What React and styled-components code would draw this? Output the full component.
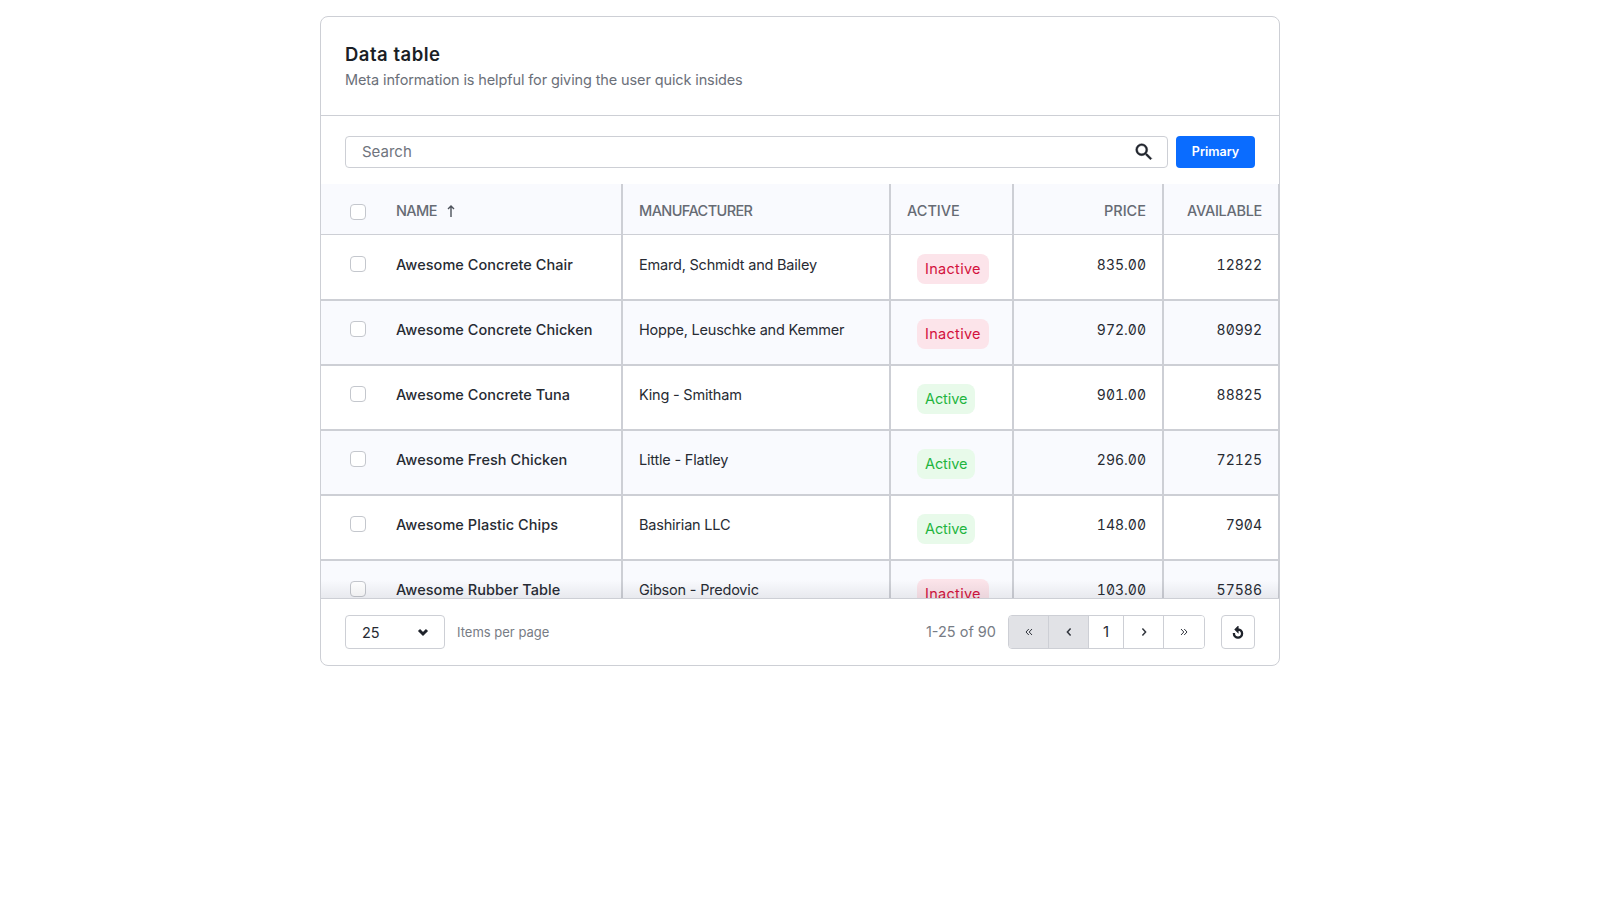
import * as React from "react";
import styled, { createGlobalStyle } from "styled-components";

const GlobalStyle = createGlobalStyle`
  * { box-sizing: border-box; }
  html, body { margin: 0; background: #fff; }
  body { font-family: Inter, "Noto Sans", sans-serif; color: #1f232b; }
`;

const Page = styled.div`
  display: flex;
  justify-content: center;
  padding-top: 16px;
`;

const Card = styled.section`
  width: 960px;
  height: 650px;
  display: flex;
  flex-direction: column;
  background: #fff;
  border: 1px solid #cdcfd5;
  border-radius: 8px;
`;

const CardHead = styled.header`
  height: 99px;
  flex: none;
  padding: 25px 24px 0;
  border-bottom: 1px solid #cdcfd5;
`;

const Title = styled.h2`
  margin: 0;
  font: 600 18.5px/24px Inter, sans-serif;
  letter-spacing: 0.5px;
  color: #1b1f26;
`;

const Subtitle = styled.p`
  margin: 4px 0 0;
  font: 400 14.5px/20px Inter, sans-serif;
  letter-spacing: -0.12px;
  color: #6b7079;
`;

const Toolbar = styled.div`
  flex: none;
  display: flex;
  gap: 8px;
  height: 68px;
  padding: 20px 24px 16px;
`;

const SearchBox = styled.label`
  flex: 1;
  display: flex;
  align-items: center;
  justify-content: space-between;
  padding: 0 16px;
  border: 1px solid #cdcfd5;
  border-radius: 4px;
  font: 400 15px/20px Inter, sans-serif;
  color: #6f747d;

  svg { width: 22px; height: 22px; fill: #1f232b; stroke: #1f232b; stroke-width: 0.5; margin-right: -4px; }
`;

const PrimaryButton = styled.button`
  width: 79px;
  border: none;
  border-radius: 4px;
  background: #0a6cff;
  color: #fff;
  font: 600 12.5px/20px Inter, sans-serif;
`;

const TableViewport = styled.div`
  position: relative;
  flex: 1;
  min-height: 0;
  overflow: hidden;
  border-bottom: 1px solid #cdcfd5;
`;

const BottomFade = styled.div`
  position: absolute;
  left: 0;
  right: 0;
  bottom: 0;
  height: 18px;
  background: linear-gradient(rgba(30, 35, 50, 0), rgba(30, 35, 50, 0.08));
  pointer-events: none;
`;

const Table = styled.table`
  width: 958px;
  table-layout: fixed;
  border-collapse: separate;
  border-spacing: 0;
`;

const Col = styled.col`
  width: ${(p) => p.$w}px;
`;

const HeadCell = styled.th`
  height: 51px;
  padding: 4px 16px 0;
  background: #f9fafe;
  border-bottom: 1px solid #cdcfd5;
  border-right: 2px solid #cdcfd5;
  font: 500 14.5px/20px Inter, sans-serif;
  letter-spacing: ${(p) => p.$spacing || "0"};
  color: #666b74;
  text-align: ${(p) => (p.$right ? "right" : "left")};
  vertical-align: middle;

  &:last-child { border-right-width: 1px; }
`;

const CheckHead = styled(HeadCell)`
  padding: 5px 0 0 29px;
  border-right: none;
`;

const NameHead = styled(HeadCell)`
  padding-left: 0;

  svg { width: 14px; height: 14px; margin-left: 7px; vertical-align: -2px; stroke: #4d525b; fill: none; stroke-width: 1.4; }
`;

const Row = styled.tr`
  background: ${(p) => (p.$alt ? "#f9fafe" : "#fff")};
`;

const Cell = styled.td`
  height: 65px;
  padding: 19px 16px 0;
  border-top: 2px solid #cdcfd5;
  border-right: 2px solid #cdcfd5;
  font: 400 14.5px/20px Inter, sans-serif;
  letter-spacing: -0.2px;
  color: #272b33;
  vertical-align: top;

  &:last-child { border-right-width: 1px; }

  tr:first-child > & {
    height: 64px;
    padding-top: 20px;
    border-top: none;
  }
`;

const CheckCell = styled(Cell)`
  padding: 20px 0 0 29px;
  border-right: none;

  tr:first-child > & { padding-top: 21px; }
`;

const NameCell = styled(Cell)`
  padding-left: 0;
  font-weight: 500;
  letter-spacing: 0.05px;
`;

const NumberCell = styled(Cell)`
  font: 400 14px/20px Inter, sans-serif;
  font-variant-numeric: tabular-nums slashed-zero;
  letter-spacing: 0;
  text-align: right;
`;

const BadgeCell = styled(Cell)`
  padding: 18px 0 0 26px;

  tr:first-child > & { padding-top: 19px; }
`;

const Checkbox = styled.span`
  display: block;
  width: 16px;
  height: 16px;
  background: #fff;
  border: 1px solid #c4c7cd;
  border-radius: 4px;
`;

const Badge = styled.span`
  display: inline-block;
  height: 30px;
  padding: 0 8px;
  border-radius: 8px;
  font: 400 14.5px/30px Inter, sans-serif;
  letter-spacing: ${(p) => (p.$on ? "-0.1px" : "0.3px")};
  background: ${(p) => (p.$on ? "#e8faea" : "#fce4ea")};
  color: ${(p) => (p.$on ? "#1fb53f" : "#d3123d")};
`;

const Footer = styled.footer`
  flex: none;
  height: 66px;
  display: flex;
  align-items: center;
  padding: 0 24px;
`;

const PageSize = styled.div`
  width: 100px;
  height: 34px;
  display: flex;
  align-items: center;
  justify-content: space-between;
  padding: 1px 15px 0 16px;
  border: 1px solid #cdcfd5;
  border-radius: 4px;
  font: 400 14.5px/20px Inter, sans-serif;
  color: #272b33;

  svg { width: 12px; height: 12px; margin-top: -1px; fill: none; stroke: #1f232b; stroke-width: 3; }
`;

const PageSizeLabel = styled.span`
  margin-left: 12px;
  font: 400 13px/20px Inter, sans-serif;
  color: #777c85;
`;

const RangeLabel = styled.span`
  margin-left: auto;
  font: 400 14.5px/20px Inter, sans-serif;
  color: #777c85;
`;

const Pager = styled.div`
  display: flex;
  height: 34px;
  margin-left: 12px;
  border: 1px solid #cdcfd5;
  border-radius: 4px;
  overflow: hidden;
`;

const PagerButton = styled.button`
  width: ${(p) => p.$w}px;
  padding: 0;
  border: none;
  border-right: ${(p) => (p.$last ? "none" : "1px solid #cdcfd5")};
  background: ${(p) => (p.$off ? "#e1e2e6" : "#fff")};
  color: #272b33;
  font: 400 15px/20px Inter, sans-serif;
  display: flex;
  align-items: center;
  justify-content: center;
`;

const PagerIcon = styled.svg`
  width: 12px;
  height: 12px;
  fill: none;
  stroke: #33373f;
  stroke-width: ${(p) => p.$weight};
`;

const RefreshButton = styled.button`
  width: 34px;
  height: 34px;
  margin-left: 16px;
  padding: 2px 0 0;
  display: flex;
  align-items: center;
  justify-content: center;
  background: #fff;
  border: 1px solid #cdcfd5;
  border-radius: 4px;

  svg { width: 14px; height: 14px; fill: #1f232b; stroke: #1f232b; stroke-width: 2; }
`;

const products = [
  ["Awesome Concrete Chair", "Emard, Schmidt and Bailey", false, "835.00", "12822"],
  ["Awesome Concrete Chicken", "Hoppe, Leuschke and Kemmer", false, "972.00", "80992"],
  ["Awesome Concrete Tuna", "King - Smitham", true, "901.00", "88825"],
  ["Awesome Fresh Chicken", "Little - Flatley", true, "296.00", "72125"],
  ["Awesome Plastic Chips", "Bashirian LLC", true, "148.00", "7904"],
  ["Awesome Rubber Table", "Gibson - Predovic", false, "103.00", "57586"],
];

function App() {
  return (
    <>
      <GlobalStyle />
      <Page>
        <Card>
          <CardHead>
            <Title>Data table</Title>
            <Subtitle>Meta information is helpful for giving the user quick insides</Subtitle>
          </CardHead>
          <Toolbar>
            <SearchBox>
              Search
              <svg viewBox="0 0 24 24">
                <path d="M15.5 14h-.79l-.28-.27A6.47 6.47 0 0 0 16 9.5 6.5 6.5 0 1 0 9.5 16c1.61 0 3.09-.59 4.23-1.57l.27.28v.79l5 4.99L20.49 19l-4.99-5zm-6 0C7.01 14 5 11.99 5 9.5S7.01 5 9.5 5 14 7.01 14 9.5 11.99 14 9.5 14z" />
              </svg>
            </SearchBox>
            <PrimaryButton>Primary</PrimaryButton>
          </Toolbar>
          <TableViewport>
            <Table>
              <colgroup>
                <Col $w={75} />
                <Col $w={227} />
                <Col $w={268} />
                <Col $w={123} />
                <Col $w={150} />
                <Col $w={115} />
              </colgroup>
              <thead>
                <tr>
                  <CheckHead><Checkbox /></CheckHead>
                  <NameHead $spacing="-0.6px">
                    NAME
                    <svg viewBox="0 0 14 14"><path d="M7 13V2M4 5l3-3 3 3" /></svg>
                  </NameHead>
                  <HeadCell $spacing="-0.6px">MANUFACTURER</HeadCell>
                  <HeadCell>ACTIVE</HeadCell>
                  <HeadCell $right>PRICE</HeadCell>
                  <HeadCell $right $spacing="-0.3px">AVAILABLE</HeadCell>
                </tr>
              </thead>
              <tbody>
                {products.map((p, i) => (
                  <Row key={p[0]} $alt={i % 2 === 1}>
                    <CheckCell><Checkbox /></CheckCell>
                    <NameCell>{p[0]}</NameCell>
                    <Cell>{p[1]}</Cell>
                    <BadgeCell><Badge $on={p[2]}>{p[2] ? "Active" : "Inactive"}</Badge></BadgeCell>
                    <NumberCell>{p[3]}</NumberCell>
                    <NumberCell>{p[4]}</NumberCell>
                  </Row>
                ))}
              </tbody>
            </Table>
            <BottomFade />
          </TableViewport>
          <Footer>
            <PageSize>
              25
              <svg viewBox="0 0 12 12"><path d="M2 4l4 4 4-4" /></svg>
            </PageSize>
            <PageSizeLabel>Items per page</PageSizeLabel>
            <RangeLabel>1-25 of 90</RangeLabel>
            <Pager>
              <PagerButton $w={40} $off>
                <PagerIcon $weight={1} viewBox="0 0 12 12"><path d="M5.8 3 3 6l2.8 3M9 3 6.2 6 9 9" /></PagerIcon>
              </PagerButton>
              <PagerButton $w={40} $off>
                <PagerIcon $weight={1.5} viewBox="0 0 12 12"><path d="M7.6 2.5 4.4 6l3.2 3.5" /></PagerIcon>
              </PagerButton>
              <PagerButton $w={35}>1</PagerButton>
              <PagerButton $w={40}>
                <PagerIcon $weight={1.5} viewBox="0 0 12 12"><path d="M4.4 2.5 7.6 6 4.4 9.5" /></PagerIcon>
              </PagerButton>
              <PagerButton $w={40} $last>
                <PagerIcon $weight={1} viewBox="0 0 12 12"><path d="M3 3l2.8 3L3 9M6.2 3 9 6l-2.8 3" /></PagerIcon>
              </PagerButton>
            </Pager>
            <RefreshButton>
              <svg viewBox="0 0 24 24">
                <path d="M12 5V1L7 6l5 5V7c3.31 0 6 2.69 6 6s-2.69 6-6 6-6-2.69-6-6H4c0 4.42 3.58 8 8 8s8-3.58 8-8-3.58-8-8-8z" />
              </svg>
            </RefreshButton>
          </Footer>
        </Card>
      </Page>
    </>
  );
}

export default App;
